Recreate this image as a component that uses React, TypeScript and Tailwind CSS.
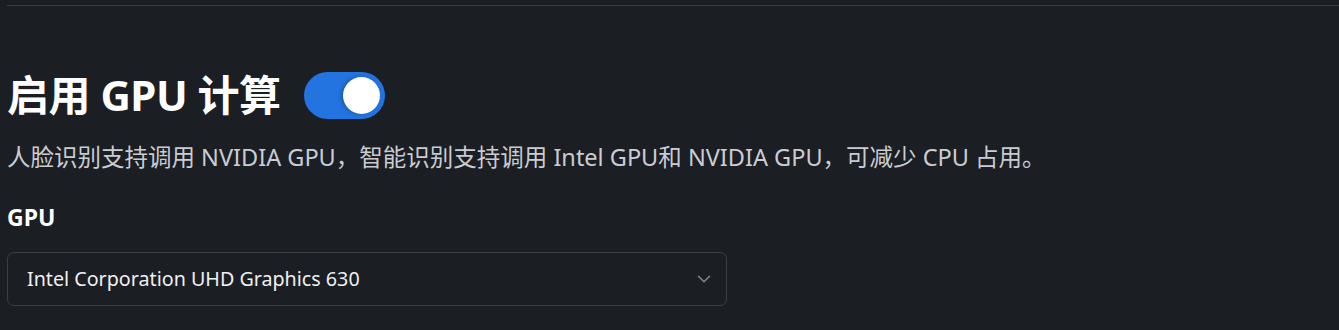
import { ChevronDown } from 'lucide-react';

const font = '"Noto Sans", "Noto Sans CJK SC", sans-serif';

export default function App() {
  return (
    <div className="min-h-screen w-full bg-[#1b1e23] pt-[5px]" style={{ fontFamily: font }}>
      {/* top divider */}
      <div className="ml-[7px] h-px bg-[#3a3f46]" />

      <div className="px-[7px] pt-[62px]">
        {/* Heading + toggle */}
        <div className="flex items-center gap-[23px] h-[54px]">
          <h1 className="text-[42px] font-bold leading-none text-white tracking-[-0.5px]">启用 GPU 计算</h1>
          <button
            type="button"
            className="relative h-[47px] w-[81px] rounded-full bg-[#2374e1]"
            aria-pressed="true"
          >
            <span className="absolute right-[5px] top-[5px] h-[37px] w-[37px] rounded-full bg-white shadow-[-2px_0_4px_rgba(0,0,0,0.25)]" />
          </button>
        </div>

        {/* Description */}
        <p className="mt-[19px] text-[23.5px] leading-[32px] text-[#c9cdd3]">
          人脸识别支持调用 NVIDIA GPU，智能识别支持调用 Intel GPU和 NVIDIA GPU，可减少 CPU 占用。
        </p>

        {/* GPU select */}
        <div className="mt-[28px] text-[23px] font-bold leading-[32px] text-white">GPU</div>
        <div className="mt-[19px] flex h-[54px] w-[720px] items-center justify-between rounded-[7px] border border-[#3a3f46] bg-[#1b1e23] pl-[19px] pr-[11px]">
          <span className="text-[19.7px] text-[#eef0f2]">Intel Corporation UHD Graphics 630</span>
          <ChevronDown size={22} strokeWidth={1.75} className="text-[#7d8590]" />
        </div>
      </div>
    </div>
  );
}
